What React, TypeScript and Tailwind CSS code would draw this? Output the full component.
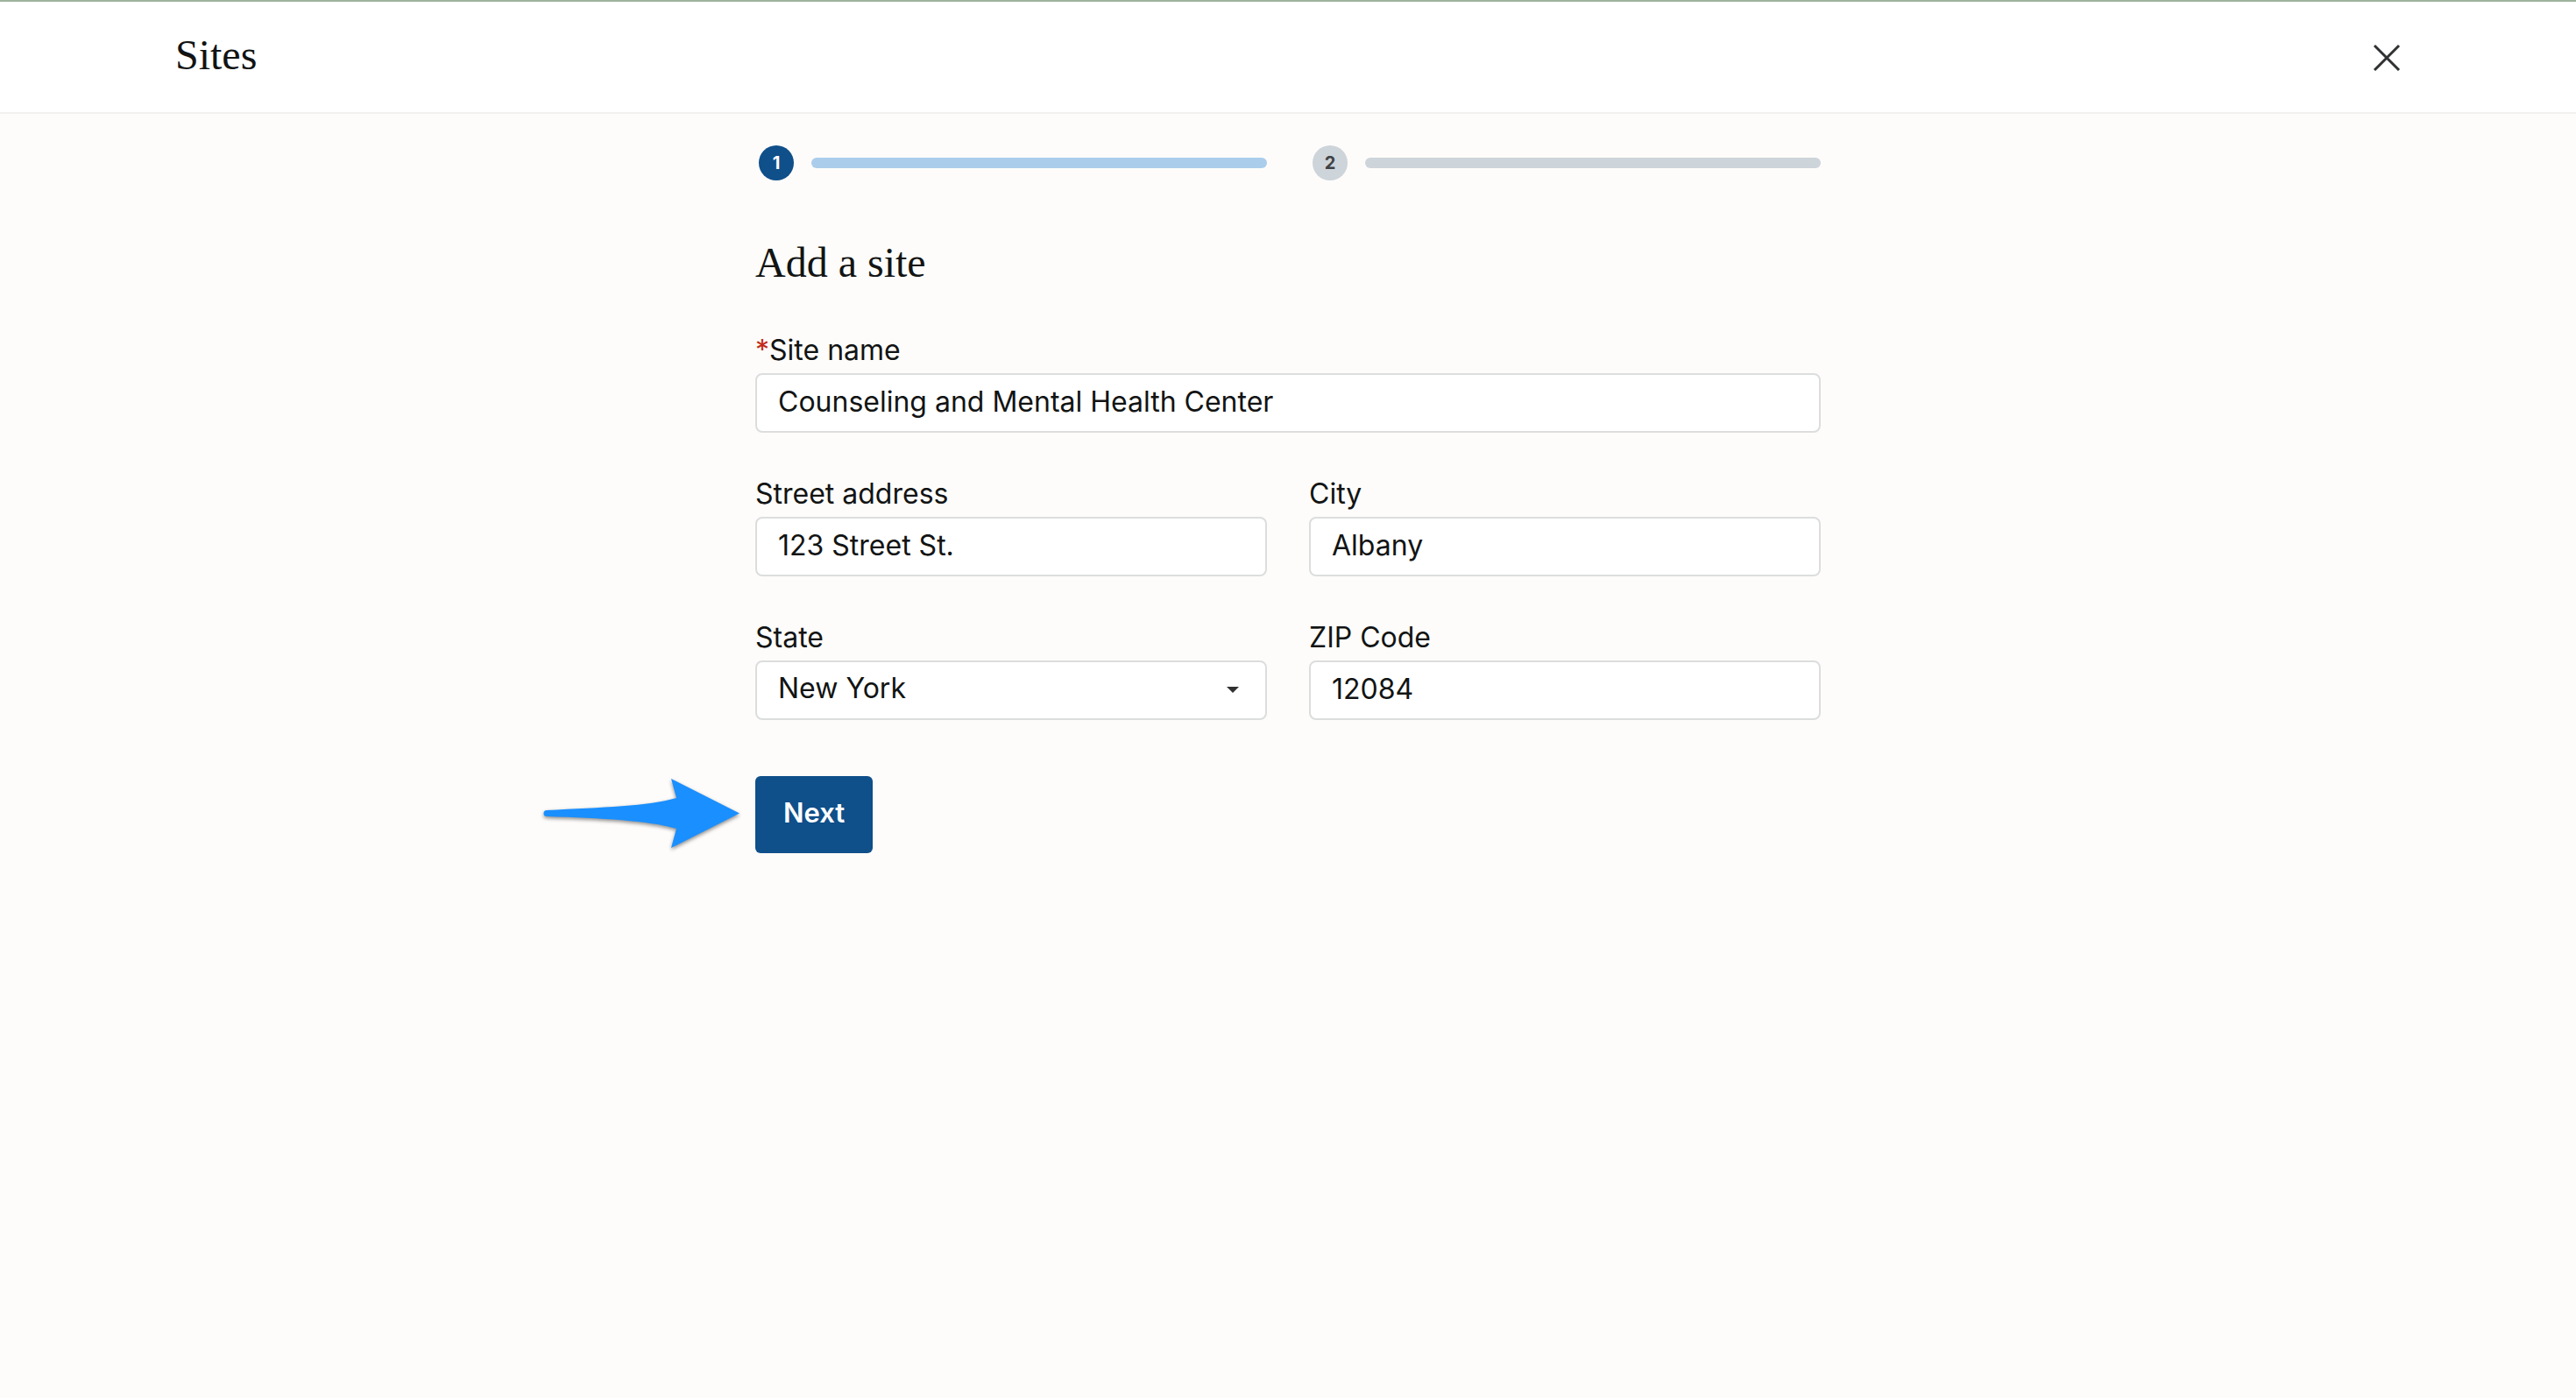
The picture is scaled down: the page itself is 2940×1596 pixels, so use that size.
import type { ReactNode } from "react";
import { clsx } from "clsx";

const STATES = ["New York", "New Jersey", "Pennsylvania", "Vermont"];

const control =
  "h-17 w-full rounded-lg border-2 border-[#dcdddd] bg-white px-6 pb-1 text-[32px] leading-10 text-[#121414] outline-none focus:border-[#0f4f8a]";

function Step({ number, active }: { number: number; active?: boolean }) {
  return (
    <li className="flex items-center gap-5 pl-1">
      <span
        className={clsx(
          "flex size-10 flex-shrink-0 items-center justify-center rounded-full text-[20px] font-bold leading-6",
          active ? "bg-[#0f4f8a] text-white" : "bg-[#cdd4da] text-[#3f4243]"
        )}
      >
        {number}
      </span>
      <span className={clsx("h-3 flex-1 rounded-full", active ? "bg-[#abcdec]" : "bg-[#cdd4da]")} />
    </li>
  );
}

function Field({
  id,
  label,
  required,
  className,
  children,
}: {
  id: string;
  label: string;
  required?: boolean;
  className?: string;
  children: ReactNode;
}) {
  return (
    <div className={className}>
      <label htmlFor={id} className="mb-1 block text-[32px] leading-11">
        {required && <span className="text-[#c22a17]">*</span>}
        {label}
      </label>
      {children}
    </div>
  );
}

function PointerArrow() {
  return (
    <svg
      width="224"
      height="80"
      viewBox="0 0 224 80"
      aria-hidden="true"
      className="absolute right-full top-1 mr-[18px] overflow-visible drop-shadow-[0_2px_2px_rgba(0,0,0,0.45)]"
    >
      <path
        d="M4 35 C68 32 122 30 152 21 L146 -1 L224 38.500 L146 78 L152 56 C122 47 68 44 4 42 A3.500 3.500 0 0 1 4 35Z"
        fill="#1a8fff"
      />
    </svg>
  );
}

export default function App() {
  return (
    <div className="min-h-screen border-t-2 border-[#9fb39d] bg-[#fdfcfa] font-['Inter',sans-serif] text-[#121414]">
      <header className="flex h-32 items-center justify-between border-b-2 border-[#f2f1ef] bg-white px-50">
        <h1 className="pb-1 font-['Liberation_Serif',serif] text-[48px] leading-14">Sites</h1>
        <button type="button" aria-label="Close" className="cursor-pointer">
          <svg width="32" height="32" viewBox="0 0 32 32" fill="none" stroke="#2f3132" strokeWidth="3">
            <path d="M2 3 30 31M30 3 2 31" />
          </svg>
        </button>
      </header>

      <main className="mx-auto max-w-304 pt-9">
        <ol className="grid grid-cols-2 gap-12">
          <Step number={1} active />
          <Step number={2} />
        </ol>

        <h2 className="mt-16 font-['Liberation_Serif',serif] text-[48px] leading-15">Add a site</h2>

        <form className="mt-12" onSubmit={(e) => e.preventDefault()}>
          <div className="grid grid-cols-2 gap-12">
            <Field id="site-name" label="Site name" required className="col-span-2">
              <input id="site-name" required defaultValue="Counseling and Mental Health Center" className={control} />
            </Field>
            <Field id="street" label="Street address">
              <input id="street" defaultValue="123 Street St." className={control} />
            </Field>
            <Field id="city" label="City">
              <input id="city" defaultValue="Albany" className={control} />
            </Field>
            <Field id="state" label="State">
              <div className="relative">
                <select id="state" defaultValue="New York" className={clsx(control, "appearance-none")}>
                  {STATES.map((s) => (
                    <option key={s}>{s}</option>
                  ))}
                </select>
                <svg
                  width="14"
                  height="8"
                  viewBox="0 0 14 8"
                  aria-hidden="true"
                  className="pointer-events-none absolute right-8 top-1/2 -translate-y-1/2"
                >
                  <path d="M0 0H14L7 7Z" fill="#2f3132" />
                </svg>
              </div>
            </Field>
            <Field id="zip" label="ZIP Code">
              <input id="zip" defaultValue="12084" className={control} />
            </Field>
          </div>

          <div className="relative mt-16 w-fit">
            <PointerArrow />
            <button
              type="submit"
              className="h-22 cursor-pointer rounded-md bg-[#0f4f8a] px-8 pb-1 text-[31px] font-semibold leading-10 text-white"
            >
              Next
            </button>
          </div>
        </form>
      </main>
    </div>
  );
}
